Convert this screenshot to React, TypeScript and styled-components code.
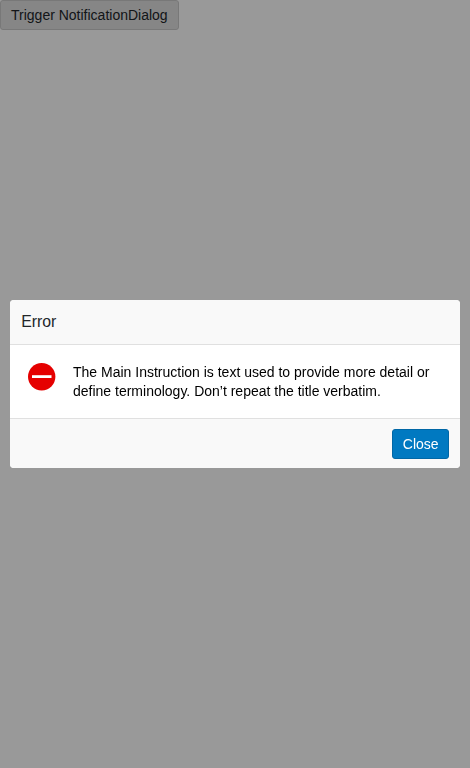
import React from "react";
import styled, { createGlobalStyle } from "styled-components";

const GlobalStyle = createGlobalStyle`
  *, *::before, *::after { box-sizing: border-box; }
  body {
    margin: 0;
    background: #fff;
    color: #000;
    font-family: "Liberation Sans", Arial, sans-serif;
    font-size: 14px;
    line-height: 19px;
  }
`;

const Button = styled.button<{ $primary?: boolean }>`
  display: block;
  height: 30px;
  margin: 0;
  padding: 0 ${(p) => (p.$primary ? "9.8px" : "10px")};
  border: 1px solid ${(p) => (p.$primary ? "#0067a6" : "#c8c8c8")};
  border-radius: 3px;
  background: ${(p) => (p.$primary ? "#0079c1" : "#e0e0e0")};
  color: ${(p) => (p.$primary ? "#fff" : "#22262a")};
  font: inherit;
  line-height: 28px;
  white-space: nowrap;
`;

const Overlay = styled.div`
  position: fixed;
  inset: 0;
  display: flex;
  align-items: center;
  justify-content: center;
  padding: 0 10px;
  background: rgba(0, 0, 0, 0.4);
`;

const Dialog = styled.section`
  display: flex;
  flex-direction: column;
  width: 450px;
  height: 168px;
  overflow: hidden;
  border-radius: 4px;
  background: #fff;
`;

const Header = styled.header`
  height: 45px;
  padding: 0 11.2px;
  border-bottom: 1px solid #e0e0e0;
  background: #f9f9f9;
`;

const Title = styled.h1`
  margin: 0;
  color: #22262a;
  font-size: 15.8px;
  font-weight: 400;
  line-height: 44px;
`;

const Body = styled.div`
  display: flex;
  flex: 1;
  gap: 17px;
  padding: 18px 18px 0;
`;

const ErrorIcon = styled.svg`
  flex: none;
  width: 28px;
  height: 28px;
`;

const Message = styled.p`
  margin: 0;
`;

const Footer = styled.footer`
  display: flex;
  justify-content: flex-end;
  height: 50px;
  padding: 10px 11px;
  border-top: 1px solid #e0e0e0;
  background: #f9f9f9;
`;

const CloseButton = styled(Button)`
  width: 57px;
`;

export default function App() {
  return (
    <>
      <GlobalStyle />
      <Button type="button">Trigger NotificationDialog</Button>
      <Overlay>
        <Dialog role="dialog" aria-modal="true" aria-labelledby="dialog-title">
          <Header>
            <Title id="dialog-title">Error</Title>
          </Header>
          <Body>
            <ErrorIcon viewBox="0 0 28 28" aria-hidden="true">
              <circle cx="13.7" cy="13.7" r="13.7" fill="#e50000" />
              <rect x="4" y="12.2" width="19.5" height="2.8" fill="#fff" />
            </ErrorIcon>
            <Message>
              The Main Instruction is text used to provide more detail or define
              terminology. Don’t repeat the title verbatim.
            </Message>
          </Body>
          <Footer>
            <CloseButton type="button" $primary>
              Close
            </CloseButton>
          </Footer>
        </Dialog>
      </Overlay>
    </>
  );
}
